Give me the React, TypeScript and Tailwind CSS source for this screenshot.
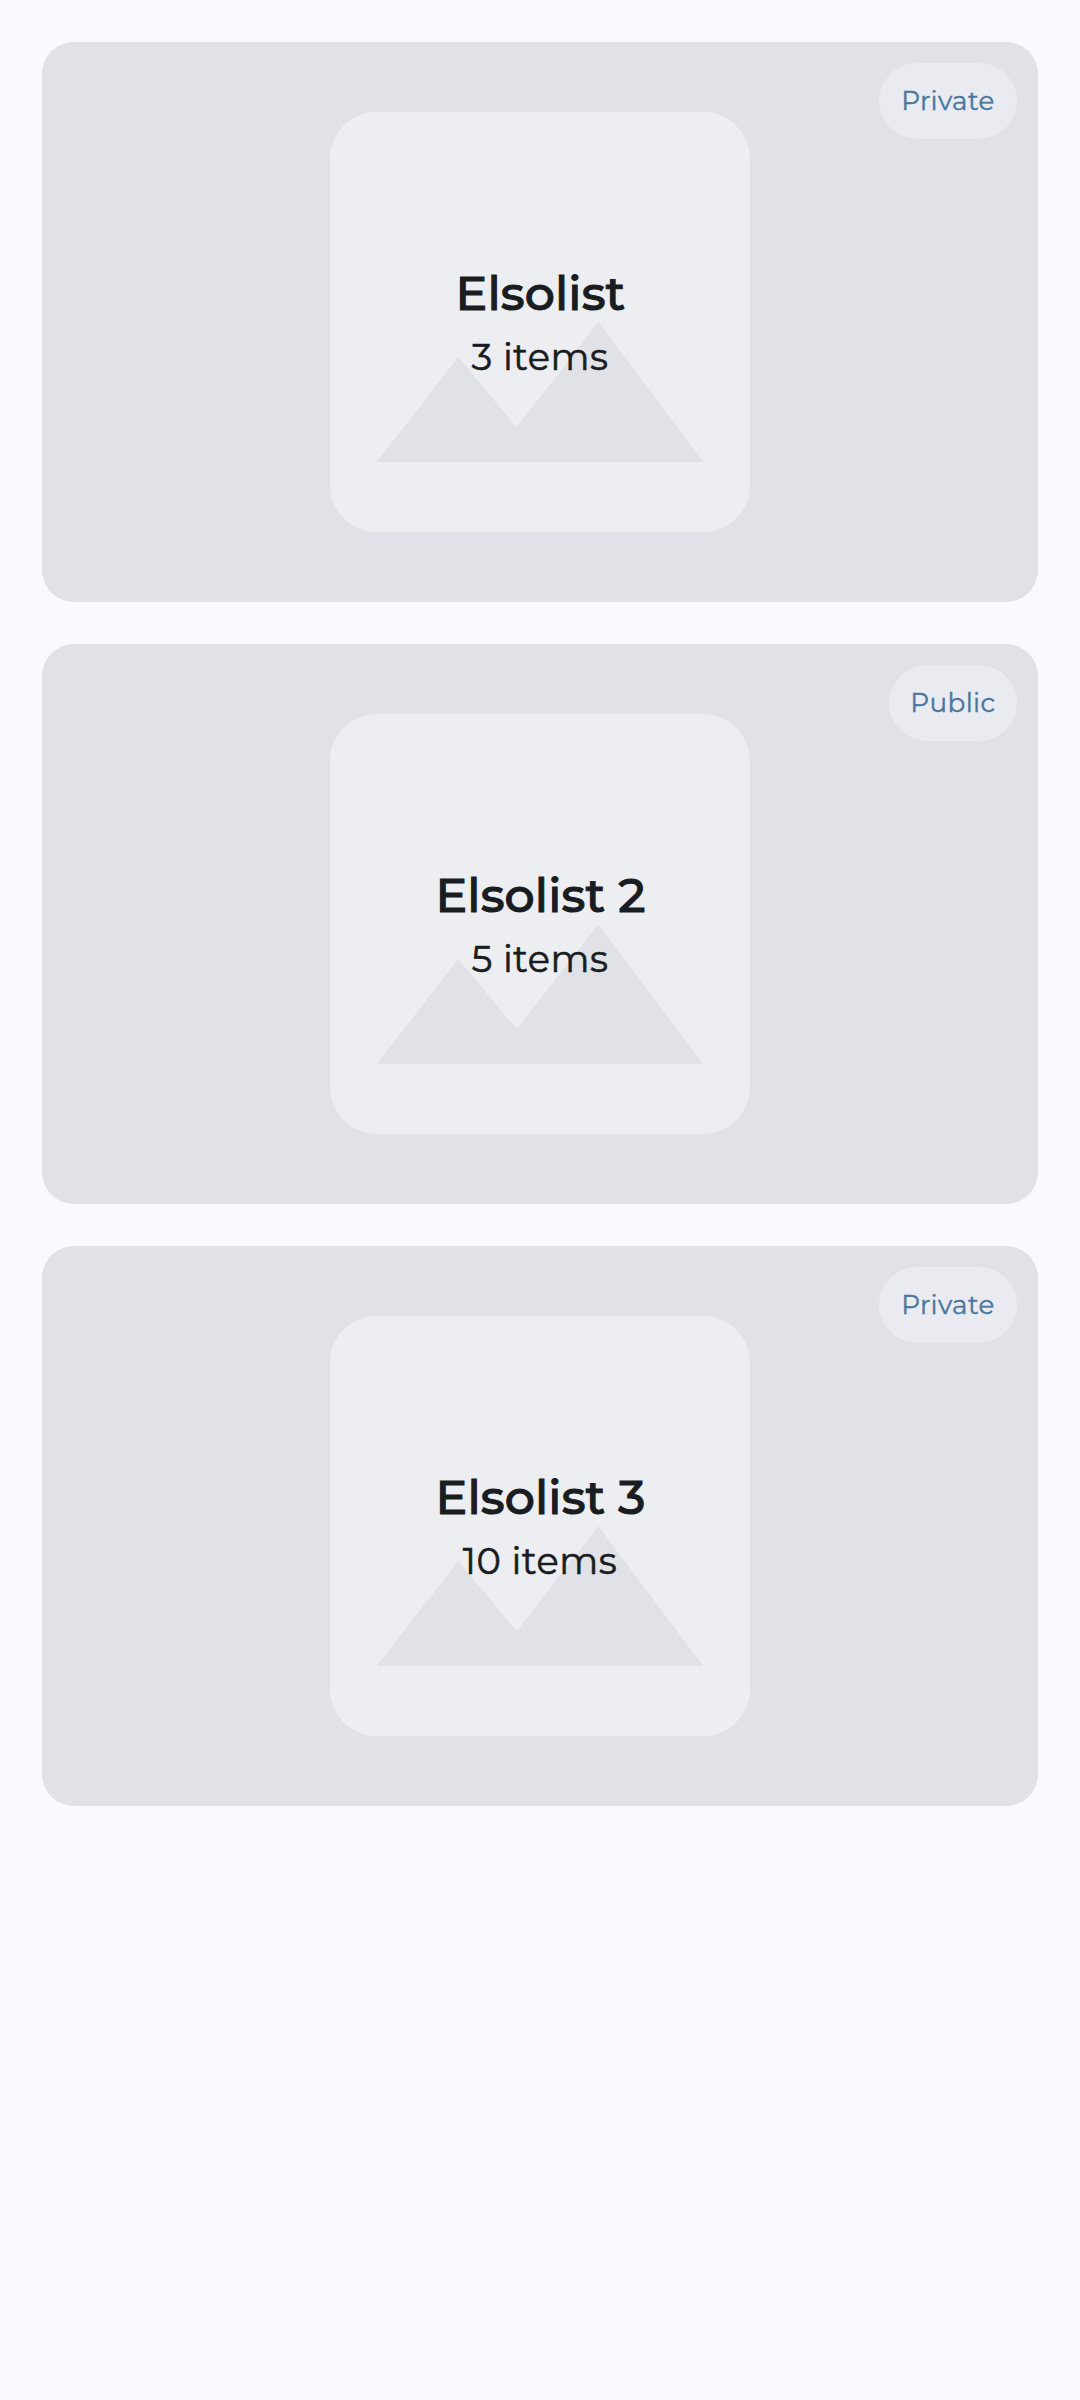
const lists = [
  { title: 'Elsolist', count: '3 items', status: 'Private' },
  { title: 'Elsolist 2', count: '5 items', status: 'Public' },
  { title: 'Elsolist 3', count: '10 items', status: 'Private' },
];

const badgeWidth: Record<string, string> = {
  Private: 'w-[138px]',
  Public: 'w-[128px]',
};

export default function App() {
  return (
    <main className="flex h-[2400px] w-[1080px] flex-col gap-[42px] bg-[#f8faff] p-[42px] font-['Montserrat','Inter',sans-serif] text-[#191c20]">
      {lists.map((list) => (
        <section key={list.title} className="relative grid h-[560px] w-full shrink-0 place-items-center overflow-hidden rounded-[32px] bg-[#e1e2e7]">
          <svg viewBox="0 0 18 18" className="size-[420px]">
            <path fill="#edeef2" d="M2 0h14c1.1 0 2 .9 2 2v14c0 1.1-.9 2-2 2H2c-1.1 0-2-.9-2-2V2C0 .9.9 0 2 0ZM11.5 9l-3.5 4.51L5.5 10.5 2 15h14z" fillRule="evenodd" />
          </svg>
          <div className="absolute inset-0 flex flex-col items-center justify-center pt-[4px]">
            <h2 className="pl-px text-[47.4px] font-medium leading-[64px] tracking-[0.15px] [-webkit-text-stroke:1.1px_#191c20]">{list.title}</h2>
            <p className="text-[36.75px] leading-[63px] tracking-[0.55px] [-webkit-text-stroke:0.6px_#191c20]">{list.count}</p>
          </div>
          <div className={`absolute right-[21px] top-[21px] flex h-[76px] items-center justify-center rounded-full bg-[#e9ebf0] pt-[2px] text-[26.25px] tracking-[0.35px] text-[#4878a0] [-webkit-text-stroke:0.4px_#4878a0] ${badgeWidth[list.status]}`}>
            {list.status}
          </div>
        </section>
      ))}
    </main>
  );
}
